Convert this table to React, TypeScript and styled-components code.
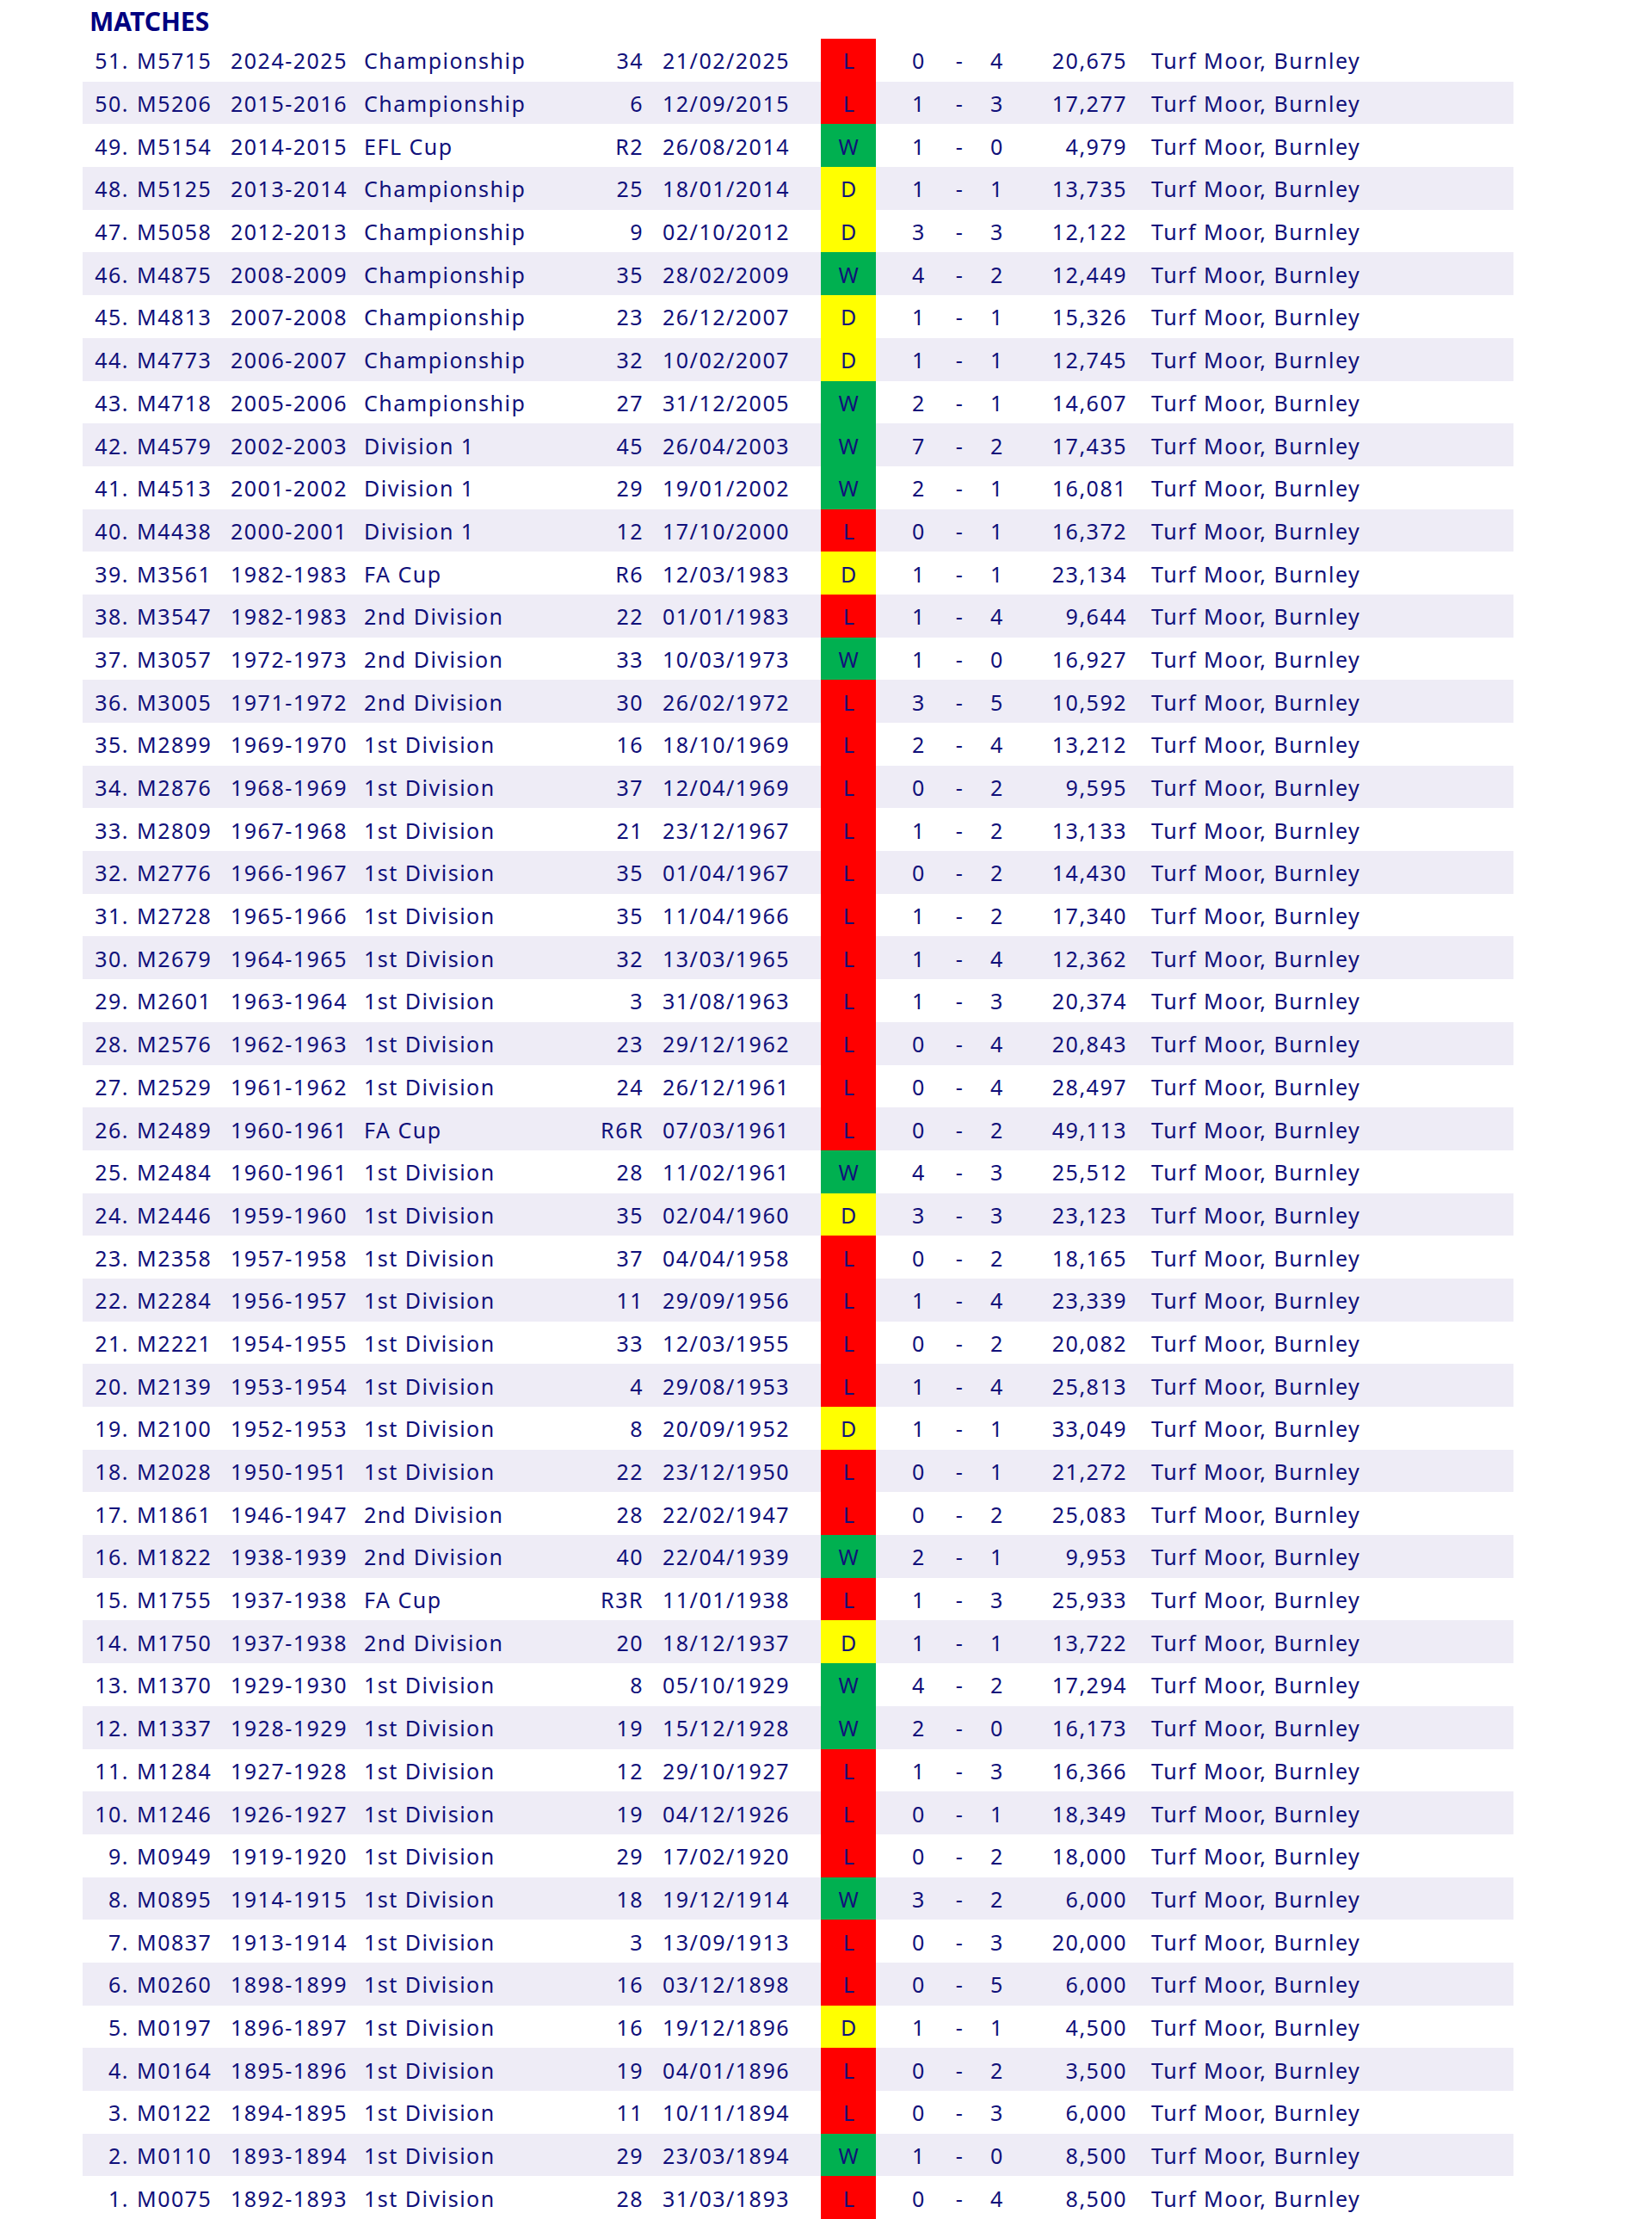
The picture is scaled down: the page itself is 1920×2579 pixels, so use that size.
import React from "react";
import styled, { createGlobalStyle } from "styled-components";

const GlobalStyle = createGlobalStyle`
  html, body { margin: 0; padding: 0; background: #ffffff; }
  body { font-family: "Noto Sans", "Open Sans", sans-serif; color: #000080; }
`;

type Result = "W" | "D" | "L";
type Match = [number, string, string, string, string, string, Result, number, number, string];

const MATCHES: Match[] = [
  [51, "M5715", "2024-2025", "Championship", "34", "21/02/2025", "L", 0, 4, "20,675"],
  [50, "M5206", "2015-2016", "Championship", "6", "12/09/2015", "L", 1, 3, "17,277"],
  [49, "M5154", "2014-2015", "EFL Cup", "R2", "26/08/2014", "W", 1, 0, "4,979"],
  [48, "M5125", "2013-2014", "Championship", "25", "18/01/2014", "D", 1, 1, "13,735"],
  [47, "M5058", "2012-2013", "Championship", "9", "02/10/2012", "D", 3, 3, "12,122"],
  [46, "M4875", "2008-2009", "Championship", "35", "28/02/2009", "W", 4, 2, "12,449"],
  [45, "M4813", "2007-2008", "Championship", "23", "26/12/2007", "D", 1, 1, "15,326"],
  [44, "M4773", "2006-2007", "Championship", "32", "10/02/2007", "D", 1, 1, "12,745"],
  [43, "M4718", "2005-2006", "Championship", "27", "31/12/2005", "W", 2, 1, "14,607"],
  [42, "M4579", "2002-2003", "Division 1", "45", "26/04/2003", "W", 7, 2, "17,435"],
  [41, "M4513", "2001-2002", "Division 1", "29", "19/01/2002", "W", 2, 1, "16,081"],
  [40, "M4438", "2000-2001", "Division 1", "12", "17/10/2000", "L", 0, 1, "16,372"],
  [39, "M3561", "1982-1983", "FA Cup", "R6", "12/03/1983", "D", 1, 1, "23,134"],
  [38, "M3547", "1982-1983", "2nd Division", "22", "01/01/1983", "L", 1, 4, "9,644"],
  [37, "M3057", "1972-1973", "2nd Division", "33", "10/03/1973", "W", 1, 0, "16,927"],
  [36, "M3005", "1971-1972", "2nd Division", "30", "26/02/1972", "L", 3, 5, "10,592"],
  [35, "M2899", "1969-1970", "1st Division", "16", "18/10/1969", "L", 2, 4, "13,212"],
  [34, "M2876", "1968-1969", "1st Division", "37", "12/04/1969", "L", 0, 2, "9,595"],
  [33, "M2809", "1967-1968", "1st Division", "21", "23/12/1967", "L", 1, 2, "13,133"],
  [32, "M2776", "1966-1967", "1st Division", "35", "01/04/1967", "L", 0, 2, "14,430"],
  [31, "M2728", "1965-1966", "1st Division", "35", "11/04/1966", "L", 1, 2, "17,340"],
  [30, "M2679", "1964-1965", "1st Division", "32", "13/03/1965", "L", 1, 4, "12,362"],
  [29, "M2601", "1963-1964", "1st Division", "3", "31/08/1963", "L", 1, 3, "20,374"],
  [28, "M2576", "1962-1963", "1st Division", "23", "29/12/1962", "L", 0, 4, "20,843"],
  [27, "M2529", "1961-1962", "1st Division", "24", "26/12/1961", "L", 0, 4, "28,497"],
  [26, "M2489", "1960-1961", "FA Cup", "R6R", "07/03/1961", "L", 0, 2, "49,113"],
  [25, "M2484", "1960-1961", "1st Division", "28", "11/02/1961", "W", 4, 3, "25,512"],
  [24, "M2446", "1959-1960", "1st Division", "35", "02/04/1960", "D", 3, 3, "23,123"],
  [23, "M2358", "1957-1958", "1st Division", "37", "04/04/1958", "L", 0, 2, "18,165"],
  [22, "M2284", "1956-1957", "1st Division", "11", "29/09/1956", "L", 1, 4, "23,339"],
  [21, "M2221", "1954-1955", "1st Division", "33", "12/03/1955", "L", 0, 2, "20,082"],
  [20, "M2139", "1953-1954", "1st Division", "4", "29/08/1953", "L", 1, 4, "25,813"],
  [19, "M2100", "1952-1953", "1st Division", "8", "20/09/1952", "D", 1, 1, "33,049"],
  [18, "M2028", "1950-1951", "1st Division", "22", "23/12/1950", "L", 0, 1, "21,272"],
  [17, "M1861", "1946-1947", "2nd Division", "28", "22/02/1947", "L", 0, 2, "25,083"],
  [16, "M1822", "1938-1939", "2nd Division", "40", "22/04/1939", "W", 2, 1, "9,953"],
  [15, "M1755", "1937-1938", "FA Cup", "R3R", "11/01/1938", "L", 1, 3, "25,933"],
  [14, "M1750", "1937-1938", "2nd Division", "20", "18/12/1937", "D", 1, 1, "13,722"],
  [13, "M1370", "1929-1930", "1st Division", "8", "05/10/1929", "W", 4, 2, "17,294"],
  [12, "M1337", "1928-1929", "1st Division", "19", "15/12/1928", "W", 2, 0, "16,173"],
  [11, "M1284", "1927-1928", "1st Division", "12", "29/10/1927", "L", 1, 3, "16,366"],
  [10, "M1246", "1926-1927", "1st Division", "19", "04/12/1926", "L", 0, 1, "18,349"],
  [9, "M0949", "1919-1920", "1st Division", "29", "17/02/1920", "L", 0, 2, "18,000"],
  [8, "M0895", "1914-1915", "1st Division", "18", "19/12/1914", "W", 3, 2, "6,000"],
  [7, "M0837", "1913-1914", "1st Division", "3", "13/09/1913", "L", 0, 3, "20,000"],
  [6, "M0260", "1898-1899", "1st Division", "16", "03/12/1898", "L", 0, 5, "6,000"],
  [5, "M0197", "1896-1897", "1st Division", "16", "19/12/1896", "D", 1, 1, "4,500"],
  [4, "M0164", "1895-1896", "1st Division", "19", "04/01/1896", "L", 0, 2, "3,500"],
  [3, "M0122", "1894-1895", "1st Division", "11", "10/11/1894", "L", 0, 3, "6,000"],
  [2, "M0110", "1893-1894", "1st Division", "29", "23/03/1894", "W", 1, 0, "8,500"],
  [1, "M0075", "1892-1893", "1st Division", "28", "31/03/1893", "L", 0, 4, "8,500"],
];

const RESULT_BG: Record<Result, string> = {
  W: "#00b050",
  D: "#ffff00",
  L: "#ff0000",
};

const Page = styled.div`
  padding-left: 96px;
  width: 1663px;
`;

const Title = styled.h2`
  margin: 0;
  height: 45px;
  box-sizing: border-box;
  padding: 5px 0 0 8px;
  font-family: "Noto Sans", sans-serif;
  font-size: 30px;
  line-height: 40px;
  font-weight: 700;
  color: #000080;
`;

const Table = styled.div`
  display: flex;
  flex-direction: column;
`;

const Row = styled.div<{ $alt: boolean }>`
  display: grid;
  grid-template-columns: 54px 118px 155px 257px 68px 206px 64px 18px 64px 31px 56px 123px 1fr;
  height: 49.7px;
  align-items: stretch;
  background: ${(p) => (p.$alt ? "#eeecf6" : "#ffffff")};
  font-family: "Noto Sans", sans-serif;
  font-size: 25px;
  letter-spacing: 1.5px;
  color: #10107a;
  white-space: nowrap;
`;

const Cell = styled.div<{ $align?: "left" | "right" | "center"; $pad?: number }>`
  display: flex;
  align-items: center;
  justify-content: ${(p) =>
    p.$align === "right" ? "flex-end" : p.$align === "center" ? "center" : "flex-start"};
  padding-left: ${(p) => p.$pad ?? 0}px;
  padding-top: 2px;
  line-height: 47px;
  overflow: visible;
`;

const ResultCell = styled(Cell)<{ $result: Result }>`
  background: ${(p) => RESULT_BG[p.$result]};
  padding-left: 2px;
`;

const Spacer = styled.div``;

export default function App() {
  return (
    <>
      <GlobalStyle />
      <Page>
        <Title>MATCHES</Title>
        <Table>
          {MATCHES.map((m, i) => (
            <Row key={m[0]} $alt={i % 2 === 1}>
              <Cell $align="right">{m[0]}.</Cell>
              <Cell $pad={9}>{m[1]}</Cell>
              <Cell>{m[2]}</Cell>
              <Cell>{m[3]}</Cell>
              <Cell $align="right">{m[4]}</Cell>
              <Cell $pad={22}>{m[5]}</Cell>
              <ResultCell $align="center" $result={m[6]}>
                {m[6]}
              </ResultCell>
              <Spacer />
              <Cell $align="center">{m[7]}</Cell>
              <Cell $align="center">-</Cell>
              <Cell $align="center">{m[8]}</Cell>
              <Cell $align="right">{m[9]}</Cell>
              <Cell $pad={28}>Turf Moor, Burnley</Cell>
            </Row>
          ))}
        </Table>
      </Page>
    </>
  );
}
